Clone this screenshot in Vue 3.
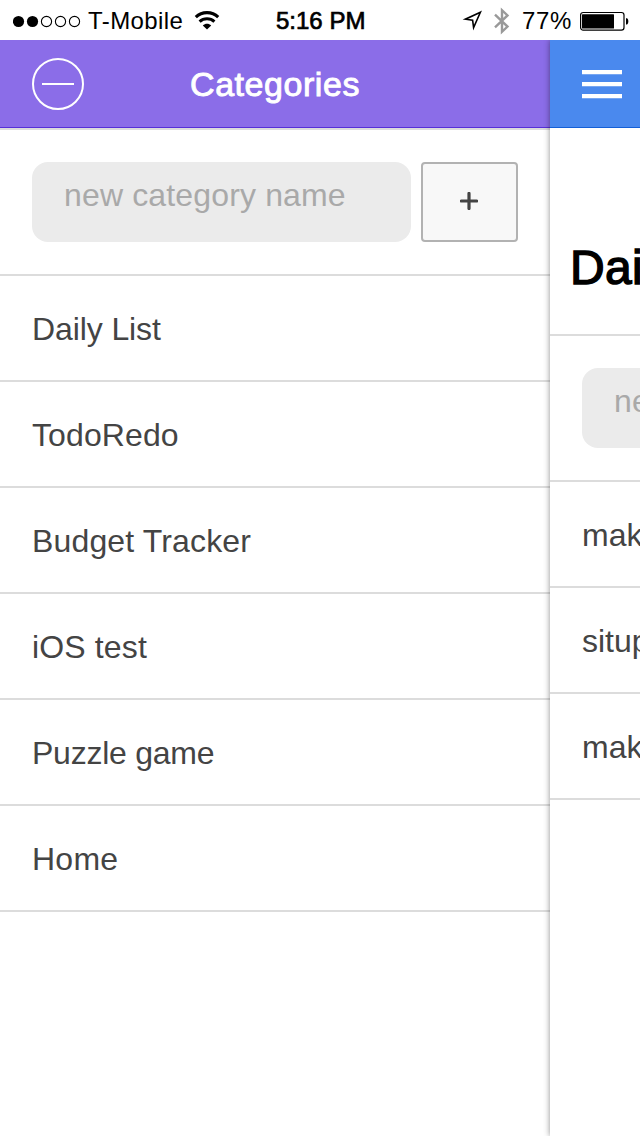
<script setup>
const categories = [
  { name: 'Daily List', spacing: -0.1 },
  { name: 'TodoRedo', spacing: 0.1 },
  { name: 'Budget Tracker', spacing: 0.15 },
  { name: 'iOS test', spacing: 0.15 },
  { name: 'Puzzle game', spacing: -0.25 },
  { name: 'Home', spacing: 0.25 }
]
const tasks = ['make bed', 'situps', 'make lunch']
</script>

<template>
  <div class="screen">
    <header class="status">
      <div class="status-left">
        <svg class="signal" width="68" height="14" viewBox="0 0 68 14">
          <circle cx="5.5" cy="6.5" r="5.6" />
          <circle cx="19.5" cy="6.5" r="5.6" />
          <circle class="empty" cx="33.5" cy="6.5" r="5.1" />
          <circle class="empty" cx="47.5" cy="6.5" r="5.1" />
          <circle class="empty" cx="61.5" cy="6.5" r="5.1" />
        </svg>
        <span class="carrier">T-Mobile</span>
        <svg class="wifi" width="26" height="20" viewBox="0 0 26 20">
          <path class="arc" d="M1.8 6.1C8 .1 18 .1 24.2 6.1" />
          <path class="arc" d="M5.6 10.6C9.8 6.8 16.2 6.8 20.4 10.6" />
          <path d="M13 18.6L8.8 14.4C11.2 12.2 14.8 12.2 17.2 14.4Z" />
        </svg>
      </div>
      <span class="clock">5:16 PM</span>
      <div class="status-right">
        <svg class="location" width="22" height="22" viewBox="0 0 22 22">
          <path d="M18.4 2.2L3.4 9.2L10.6 10.2L11.6 17.6Z" />
        </svg>
        <svg class="bluetooth" width="18" height="28" viewBox="0 0 18 28">
          <path d="M2 7.6L14.5 19.6L9 24.8V3.2L14.5 8.4L2 20.4" />
        </svg>
        <span class="percent">77%</span>
        <svg class="battery" width="50" height="20" viewBox="0 0 50 20">
          <rect class="shell" x="1.6" y="1.5" width="43.4" height="17.6" rx="2.6" />
          <rect x="3" y="3.2" width="32" height="14.4" rx="0.5" />
          <path d="M47 7.2H48C49.8 8.2 49.8 12.4 48 13.6H47Z" />
        </svg>
      </div>
    </header>

    <main class="panels">
      <section class="menu">
        <div class="bar purple">
          <svg class="minus" width="52" height="52" viewBox="0 0 52 52">
            <circle cx="26" cy="26" r="25" />
            <path d="M10 26H42" />
          </svg>
          <h1 class="bar-title">Categories</h1>
        </div>
        <div class="new-row">
          <div class="field"><span>new category name</span></div>
          <button class="add" type="button" aria-label="Add category">
            <svg width="18" height="18" viewBox="0 0 18 18"><path d="M1.4 9H16.6M9 1.4V16.6" /></svg>
          </button>
        </div>
        <ul class="list">
          <li v-for="item in categories" :key="item.name" :style="{ letterSpacing: item.spacing + 'px' }">{{ item.name }}</li>
        </ul>
      </section>

      <section class="content">
        <div class="bar blue">
          <svg width="40" height="30" viewBox="0 0 40 30">
            <path class="faint" d="M0 4.5H40M0 16.5H40M0 28.5H40" />
            <path d="M0 2H40M0 14H40M0 26H40" />
          </svg>
        </div>
        <h2 class="heading">Daily List</h2>
        <div class="new-row">
          <div class="field"><span>new task name</span></div>
        </div>
        <ul class="list">
          <li v-for="(task, i) in tasks" :key="i">{{ task }}</li>
        </ul>
      </section>
    </main>
  </div>
</template>

<style>
body {
  margin: 0;
  background: #fff;
}
</style>

<style scoped>
.screen {
  width: 640px;
  height: 1136px;
  overflow: hidden;
  display: flex;
  flex-direction: column;
  background: #fff;
  color: #444;
  font-family: "Liberation Sans", Arial, sans-serif;
  font-size: 32px;
}

svg {
  display: block;
  flex: none;
}

.status {
  flex: none;
  height: 40px;
  display: grid;
  grid-template-columns: 276px 89px 275px;
  align-items: center;
  color: #000;
  font-size: 24px;
  line-height: 40px;
  white-space: nowrap;
}

.status-left,
.status-right {
  display: flex;
  align-items: center;
  height: 40px;
}

.signal {
  margin-left: 13px;
  margin-top: 2px;
}

.signal .empty {
  fill: none;
  stroke: #000;
  stroke-width: 1.1;
}

.carrier {
  margin-left: 7px;
  width: 98px;
  padding-top: 1px;
  letter-spacing: 0.4px;
}

.wifi {
  margin-left: 8px;
}

.wifi .arc {
  fill: none;
  stroke: #000;
  stroke-width: 3.1;
}

.clock {
  padding-top: 1px;
  letter-spacing: 0;
  -webkit-text-stroke: 0.7px #000;
}

.location {
  margin-left: 97px;
}

.location path {
  fill: none;
  stroke: #000;
  stroke-width: 1.6;
}

.bluetooth {
  margin-left: 9px;
}

.bluetooth path {
  fill: none;
  stroke: #999;
  stroke-width: 2.4;
}

.percent {
  margin-left: 11px;
  width: 50px;
  padding-top: 1px;
  letter-spacing: 0.6px;
}

.battery {
  margin-left: 7px;
}

.battery .shell {
  fill: none;
  stroke: #000;
  stroke-width: 1.2;
}

.panels {
  flex: 1;
  display: grid;
  grid-template-columns: 550px 90px;
}

.menu,
.content {
  min-width: 0;
  background: #fff;
}

.content {
  position: relative;
  box-shadow: 0 0 6px rgba(0, 0, 0, 0.45);
  clip-path: inset(0 0 0 -12px);
  white-space: nowrap;
}

.bar {
  box-sizing: border-box;
  height: 88px;
  padding: 0 32px;
  display: grid;
  align-items: center;
}

.purple {
  grid-template-columns: 52px 1fr 52px;
  background: #8b6de8;
  border-bottom: 1px solid #5630d8;
}

.blue {
  background: #4a89ee;
  border-bottom: 1px solid #145fd7;
}

.minus {
  margin-top: 1px;
  fill: none;
  stroke: #fff;
  stroke-width: 2;
}

.bar-title {
  margin: 0;
  color: #fff;
  font-size: 34px;
  font-weight: 400;
  line-height: 40px;
  letter-spacing: 0.55px;
  text-align: center;
  -webkit-text-stroke: 0.9px #fff;
}

.blue svg {
  margin-top: 3px;
  fill: none;
  stroke: #fff;
  stroke-width: 4;
}

.blue .faint {
  stroke: #77a6f2;
  stroke-width: 1;
}

.new-row {
  box-sizing: border-box;
  height: 146px;
  padding: 32px;
  display: flex;
  gap: 10px;
  border-bottom: 2px solid #dcdcdc;
}

.menu .new-row {
  height: 148px;
  border-top: 2px solid #dcdcdc;
}

.field {
  box-sizing: border-box;
  flex: none;
  width: 379px;
  height: 80px;
  padding-left: 32px;
  border-radius: 16px;
  background: #ebebeb;
  color: #a9a9a9;
  line-height: 66px;
  letter-spacing: 0.15px;
}

.add {
  box-sizing: border-box;
  width: 97px;
  height: 80px;
  margin: 0;
  padding: 0 1px 2px 0;
  display: grid;
  place-items: center;
  border: 2px solid #b2b2b2;
  border-radius: 4px;
  background: #f8f8f8;
}

.add svg {
  fill: none;
  stroke: #444;
  stroke-width: 3.2;
  stroke-linecap: round;
}

.list {
  margin: 0;
  padding: 0;
  list-style: none;
}

.list li {
  box-sizing: border-box;
  height: 106px;
  padding: 1px 32px 0;
  border-bottom: 2px solid #dcdcdc;
  line-height: 104px;
}

.heading {
  box-sizing: border-box;
  height: 208px;
  margin: 0;
  padding: 113px 0 0 20px;
  border-bottom: 2px solid #dcdcdc;
  color: #000;
  font-size: 48px;
  font-weight: 400;
  line-height: 54px;
  letter-spacing: 0.3px;
  -webkit-text-stroke: 1.4px #000;
}
</style>
